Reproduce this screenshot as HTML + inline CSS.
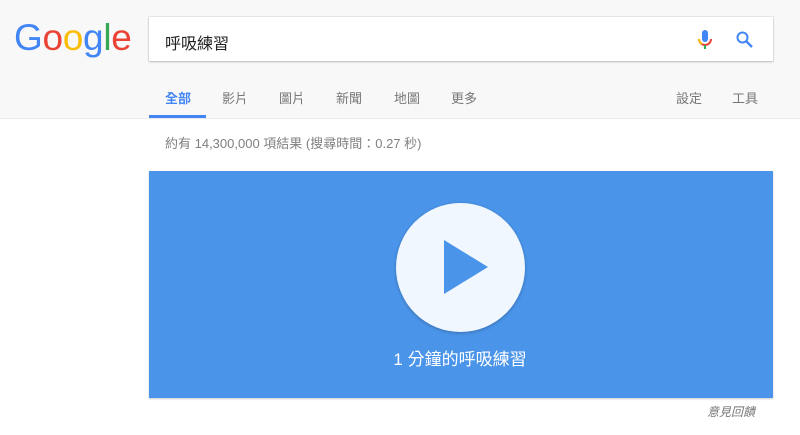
<!DOCTYPE html>
<html><head><meta charset="utf-8"><style>
body{margin:0;width:800px;height:435px;background:#fff;font-family:"Liberation Sans","Noto Sans CJK TC",sans-serif;position:relative;overflow:hidden}
.hdr{position:absolute;left:0;top:0;width:800px;height:118px;background:#f8f8f8;border-bottom:1px solid #ebebeb}
.logo{position:absolute;left:14px;top:17px;font-size:37px;letter-spacing:-0.3px;font-family:"Liberation Sans",sans-serif}
.box{position:absolute;left:149px;top:17px;width:624px;height:44px;background:#fff;box-shadow:0 1px 2px rgba(0,0,0,.2),0 0 0 1px rgba(0,0,0,.06);}
.q{position:absolute;left:165px;top:30px;font-size:16px;color:#222}
.tab{position:absolute;top:88px;font-size:13px;color:#777}
.ul{position:absolute;left:149px;top:115px;width:57px;height:3px;background:#4285f4}
.stat{position:absolute;left:165px;top:133px;font-size:13px;color:#808080}
.card{position:absolute;left:149px;top:171px;width:624px;height:227px;background:#4a94e9;box-shadow:0 1px 2px rgba(0,0,0,.2)}
.circ{position:absolute;left:396px;top:203px;width:129px;height:129px;border-radius:50%;background:#f1f7fe;box-shadow:0 1px 3px rgba(0,0,0,.25)}
.ct{position:absolute;left:0;width:920px;top:345px;text-align:center;font-size:17px;color:#fff}
.fb{position:absolute;left:707px;top:403px;font-size:12px;color:#777;font-style:italic}
</style></head><body>
<div class="hdr"></div>
<div class="logo"><span style="color:#4285f4">G</span><span style="color:#ea4335">o</span><span style="color:#fbbc05">o</span><span style="color:#4285f4">g</span><span style="color:#34a853">l</span><span style="color:#ea4335">e</span></div>
<div class="box"></div>
<div class="q">呼吸練習</div>
<svg style="position:absolute;left:696px;top:28px" width="18" height="24" viewBox="0 0 18 24">
<rect x="6" y="2" width="6" height="12" rx="3" fill="#4285f4"/>
<path d="M3 11a6 6 0 0 0 12 0" fill="none" stroke="#ea4335" stroke-width="2"/>
<path d="M3 11a6 6 0 0 0 3 5" fill="none" stroke="#fbbc05" stroke-width="2"/>
<rect x="8" y="17" width="2" height="4" fill="#34a853"/>
</svg>
<svg style="position:absolute;left:735px;top:30px" width="20" height="20" viewBox="0 0 20 20">
<circle cx="7.5" cy="7.5" r="5" fill="none" stroke="#4285f4" stroke-width="2"/>
<path d="M11 11l6 6" stroke="#4285f4" stroke-width="2.4"/>
</svg>
<div class="tab" style="left:165px;color:#4285f4;font-weight:bold">全部</div>
<div class="tab" style="left:222px">影片</div>
<div class="tab" style="left:279px">圖片</div>
<div class="tab" style="left:336px">新聞</div>
<div class="tab" style="left:394px">地圖</div>
<div class="tab" style="left:451px">更多</div>
<div class="tab" style="left:676px">設定</div>
<div class="tab" style="left:732px">工具</div>
<div class="ul"></div>
<div class="stat">約有 14,300,000 項結果 (搜尋時間：0.27 秒)</div>
<div class="card"></div>
<div class="circ"></div>
<svg style="position:absolute;left:444px;top:240px" width="45" height="55"><polygon points="0,0 44,27 0,54" fill="#4a94e9"/></svg>
<div class="ct">1 分鐘的呼吸練習</div>
<div class="fb">意見回饋</div>
</body></html>
